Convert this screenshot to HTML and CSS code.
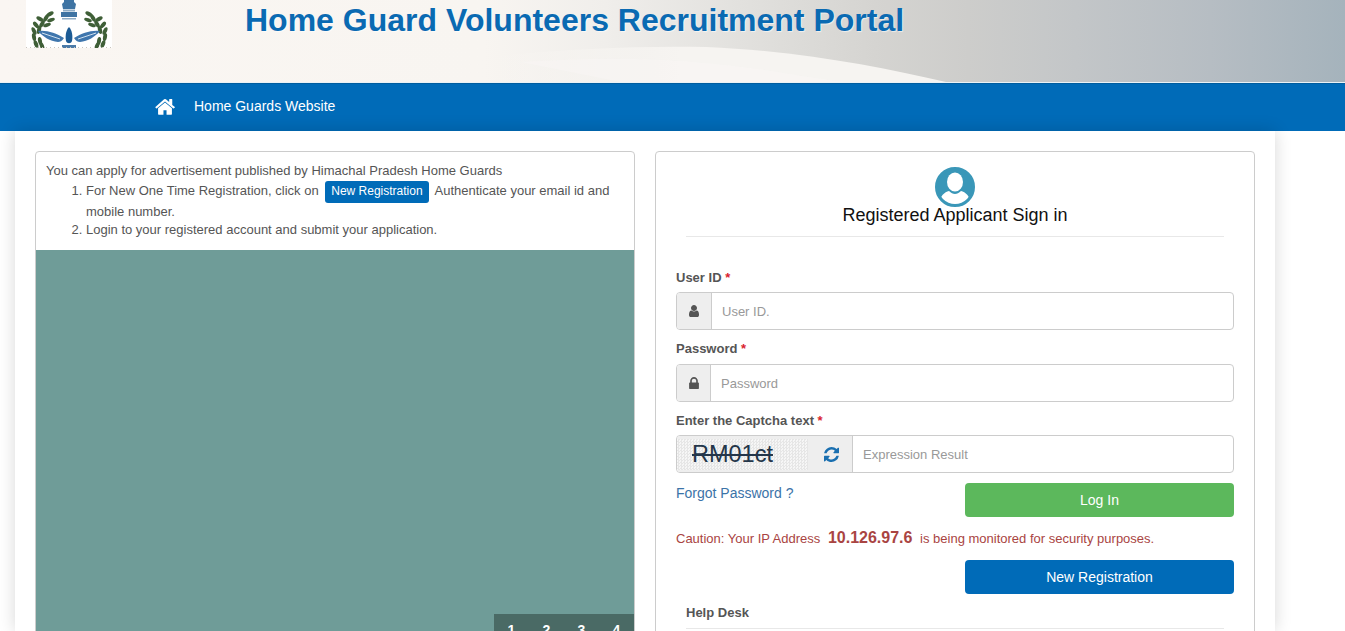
FILE: index.html
```html
<!DOCTYPE html>
<html lang="en">
<head>
<meta charset="utf-8">
<title>Home Guard Volunteers Recruitment Portal</title>
<link rel="stylesheet" href="styles.css">
</head>
<body>
<header class="banner">
  <svg class="banner-art" viewBox="0 0 1345 82" preserveAspectRatio="none" aria-hidden="true">
    <defs>
      <linearGradient id="sky" x1="0" x2="1" y1="0" y2="0">
        <stop offset="0" stop-color="#faf6f2"/>
        <stop offset="0.36" stop-color="#f8f5f1"/>
        <stop offset="0.45" stop-color="#f0eeeb"/>
        <stop offset="0.55" stop-color="#e2e1de"/>
        <stop offset="0.65" stop-color="#d5d4d1"/>
        <stop offset="0.72" stop-color="#cdcdcb"/>
        <stop offset="0.8" stop-color="#c3c6c8"/>
        <stop offset="0.9" stop-color="#b6bdc3"/>
        <stop offset="1" stop-color="#a5b3bc"/>
      </linearGradient>
      <linearGradient id="swoosh" x1="440" x2="680" y1="0" y2="0" gradientUnits="userSpaceOnUse">
        <stop offset="0" stop-color="#f8f5f1" stop-opacity="0"/>
        <stop offset="1" stop-color="#f6f4f1"/>
      </linearGradient>
    </defs>
    <rect width="1345" height="82" fill="url(#sky)"/>
    <path d="M440 62 C520 52 620 45 706 47 C800 51 880 67 946 82 L440 82 Z" fill="url(#swoosh)"/>
    <path d="M520 62 C610 56 690 57 790 74 C815 78 830 80 845 82 L620 82 Z" fill="#fbfaf8" opacity=".3"/>
  </svg>
  <svg class="emblem" viewBox="0 0 86 48" aria-hidden="true">
    <defs>
      <g id="wreath">
        <ellipse cx="24" cy="14" rx="4" ry="2" transform="rotate(-30 24 14)"/>
        <ellipse cx="20" cy="18" rx="4" ry="2" transform="rotate(-60 20 18)"/>
        <ellipse cx="25" cy="20" rx="4" ry="1.800" transform="rotate(-20 25 20)"/>
        <ellipse cx="14" cy="19" rx="4" ry="2" transform="rotate(30 14 19)"/>
        <ellipse cx="16" cy="24" rx="4" ry="2" transform="rotate(-60 16 24)"/>
        <ellipse cx="21" cy="25" rx="4" ry="1.800" transform="rotate(-20 21 25)"/>
        <ellipse cx="10" cy="25" rx="4" ry="2" transform="rotate(50 10 25)"/>
        <ellipse cx="13" cy="30" rx="4" ry="2" transform="rotate(-75 13 30)"/>
        <ellipse cx="8" cy="31" rx="4" ry="2" transform="rotate(65 8 31)"/>
        <ellipse cx="8" cy="37" rx="4" ry="2" transform="rotate(80 8 37)"/>
        <ellipse cx="14" cy="41" rx="4" ry="2" transform="rotate(-100 14 41)"/>
        <ellipse cx="10" cy="44" rx="4" ry="2" transform="rotate(70 10 44)"/>
        <ellipse cx="16" cy="46" rx="4" ry="2" transform="rotate(-110 16 46)"/>
      </g>
    </defs>
    <rect width="86" height="48" fill="#fff"/>
    <path d="M38 0h10v2l2 2-1 5h-12l-1-5 2-2z" fill="#3f74a3"/>
    <path d="M37 9.500h12v2H37z" fill="#8fadc6"/>
    <path d="M35 12h16v5H35z" fill="#3f74a3"/>
    <path d="M36 18h14v1.500H36z" fill="#8fadc6"/>
    <use href="#wreath" fill="#3f5f37"/>
    <use href="#wreath" fill="#3f5f37" transform="matrix(-1 0 0 1 87 0)"/>
    <path d="M12 31c9-1 18 2 26 7-2 3-4 4-6 4-8-1-15-5-20-11zM74 31c-9-1-18 2-26 7 2 3 4 4 6 4 8-1 15-5 20-11z" fill="#3f76ad"/>
    <path d="M16 33l18 6M70 33l-18 6" stroke="#cfe0ee" stroke-width="1"/>
    <path d="M43 27c3 3 4 9 3 14-1 3-5 3-6 0-1-5 0-11 3-14z" fill="#1b5a94"/>
    <path d="M36 45h14v3H36z" fill="#4a7aa8"/>
    <path d="M0 47.500h86" stroke="#c9c4bd" stroke-width="1" stroke-dasharray="1 3"/>
  </svg>
  <h1 class="banner-title">Home Guard Volunteers Recruitment Portal</h1>
</header>

<nav class="topnav">
  <svg class="home-icon" viewBox="0 0 1664 1408" aria-hidden="true">
    <path fill="#fff" d="M1408 768v480q0 26-19 45t-45 19H960V928H704v384H320q-26 0-45-19t-19-45V768q0-1 .5-3t.5-3l575-474 575 474q1 2 1 6zm223-69-62 74q-8 9-21 11h-3q-13 0-21-7L832 200 140 777q-12 8-24 7-13-2-21-11l-62-74q-8-10-7-23.500t11-21.500L756 25q32-25 76-25t76 25l272 227V35q0-14 9-23t23-9h192q14 0 23 9t9 23v454l219 182q10 8 11 21.500t-7 23.500z"/>
  </svg>
  <a class="topnav-link" href="#">Home Guards Website</a>
</nav>

<main class="sheet">
  <section class="panel info">
    <div class="info-text">
      <p class="info-lead">You can apply for advertisement published by Himachal Pradesh Home Guards</p>
      <ol class="info-steps">
        <li>For New One Time Registration, click on <a class="chip" href="#">New Registration</a> Authenticate your email id and mobile number.</li>
        <li>Login to your registered account and submit your application.</li>
      </ol>
    </div>
    <div class="slider">
      <div class="pager"><span>1</span><span>2</span><span>3</span><span>4</span></div>
    </div>
  </section>

  <section class="panel signin">
    <div class="signin-head">
      <svg class="avatar" viewBox="0 0 40 40" aria-hidden="true">
        <circle cx="20" cy="20" r="18" fill="#fff" stroke="#3a97b8" stroke-width="4"/>
        <clipPath id="face"><circle cx="20" cy="20" r="17"/></clipPath>
        <g clip-path="url(#face)">
          <rect width="40" height="40" fill="#3a97b8"/>
          <ellipse cx="20" cy="15" rx="8" ry="9.500" fill="#fff"/>
          <path d="M4 40c0-10 5-15 10-16 2 2 4 3 6 3s4-1 6-3c5 1 10 6 10 16z" fill="#fff"/>
        </g>
      </svg>
      <h2 class="signin-title">Registered Applicant Sign in</h2>
    </div>

    <form class="form">
      <label class="field-label">User ID <em>*</em></label>
      <div class="input-group">
        <span class="addon addon-user">
          <svg class="addon-icon" viewBox="256 128 1280 1536" aria-hidden="true"><path fill="#555" d="M1536 1399q0 109-62.500 187t-150.500 78H469q-88 0-150.500-78T256 1399q0-85 8.500-160.500t31.500-152 58.500-131 94-89T583 832q131 128 313 128t313-128q76 0 134.500 34.500t94 89 58.500 131 31.500 152 8.500 160.500zm-256-887q0 159-112.500 271.500T896 896 624.500 783.500 512 512t112.500-271.500T896 128t271.500 112.500T1280 512z"/></svg>
        </span>
        <span class="control">User ID.</span>
      </div>

      <label class="field-label field-label-loose">Password <em>*</em></label>
      <div class="input-group">
        <span class="addon addon-lock">
          <svg class="addon-icon" viewBox="0 0 1152 1408" aria-hidden="true"><path fill="#555" d="M320 640h512V448q0-106-75-181t-181-75-181 75-75 181v192zm832 96v576q0 40-28 68t-68 28H96q-40 0-68-28t-28-68V736q0-40 28-68t68-28h32V448q0-184 132-316T576 0t316 132 132 316v192h32q40 0 68 28t28 68z"/></svg>
        </span>
        <span class="control">Password</span>
      </div>

      <label class="field-label">Enter the Captcha text <em>*</em></label>
      <div class="input-group">
        <span class="addon addon-captcha">
          <span class="captcha">RM01ct</span>
          <svg class="refresh" viewBox="0 0 1536 1536" aria-hidden="true"><path fill="#1a6fb0" d="M1511 928q0 5-1 7-64 268-268 434.500T764 1536q-146 0-282.500-55T238 1324l-129 129q-19 19-45 19t-45-19-19-45V960q0-26 19-45t45-19h448q26 0 45 19t19 45-19 45L420 1142q71 66 161 102t187 36q134 0 250-65t186-179q11-17 53-117 8-23 30-23h192q13 0 22.500 9.500t9.500 22.500zm25-800v448q0 26-19 45t-45 19h-448q-26 0-45-19t-19-45 19-45l138-138q-148-137-349-137-134 0-250 65T332 500q-11 17-53 117-8 23-30 23H50q-13 0-22.500-9.500T18 608v-7q65-268 270-434.500T768 0q146 0 284 55.500T1297 212l130-129q19-19 45-19t45 19 19 45z"/></svg>
        </span>
        <span class="control">Expression Result</span>
      </div>

      <div class="action-row action-login">
        <a class="forgot" href="#">Forgot Password ?</a>
        <button class="btn btn-green" type="button">Log In</button>
      </div>

      <p class="caution">Caution: Your IP Address <strong>10.126.97.6</strong> is being monitored for security purposes.</p>

      <div class="action-row action-register">
        <button class="btn btn-blue" type="button">New Registration</button>
      </div>
    </form>

    <h3 class="help-title">Help Desk</h3>
  </section>
</main>
</body>
</html>
```

FILE: styles.css
```css
* { box-sizing: border-box; }
html, body { margin: 0; height: 631px; overflow: hidden; background: #fff; }
body { font-family: "Liberation Sans", Arial, sans-serif; font-size: 13px; color: #555; }

.banner { position: relative; height: 83px; padding-left: 245px; border-bottom: 1px solid #eaf2f6; overflow: hidden; }
.banner-art { position: absolute; left: 0; top: 0; width: 100%; height: 82px; }
.emblem { position: absolute; left: 26px; top: 0; width: 86px; height: 48px; }
.banner-title { position: relative; margin: 0; padding-top: 1px; font-size: 32px; line-height: 38px; font-weight: 700; color: #0a6ab2; white-space: nowrap; text-shadow: 1px 1px 1px rgba(255,255,255,.6); }

.topnav { display: flex; align-items: center; height: 48px; padding-left: 154.500px; background: #006bb8; border-top: 1px solid #005d9f; }
.home-icon { width: 20px; height: 17px; }
.topnav-link { margin-left: 19.500px; padding-bottom: 4px; color: #fff; font-size: 14px; text-decoration: none; }

.sheet { display: flex; align-items: flex-start; gap: 20px; width: 1260px; height: 500px; margin-left: 15px; padding: 20px 20px 0; background: #fff; box-shadow: 0 0 16px rgba(0,0,0,.16); }
.panel { width: 600px; background: #fff; border: 1px solid #ccc; border-radius: 4px; flex: none; }

.info { height: 520px; overflow: hidden; }
.info-text { height: 98px; padding: 10px 10px 0; line-height: 18.570px; }
.info-lead { margin: 0; }
.info-steps { margin: 0; padding-left: 40px; }
.chip { display: inline-block; height: 22px; margin: 0 3px; padding: 0 6px; line-height: 21px; background: #006bb8; color: #fff; border-radius: 3px; text-decoration: none; font-size: 12px; vertical-align: middle; }
.slider { position: relative; height: 422px; background: #6f9c98; }
.pager { position: absolute; right: 0; top: 364px; display: flex; width: 140px; height: 58px; padding-top: 8px; background: #4a6a65; color: #fff; font-size: 14px; font-weight: 700; }
.pager span { flex: none; width: 35px; text-align: center; line-height: 16px; }

.signin { height: 520px; padding: 0 20px; }
.signin-head { display: flex; flex-direction: column; align-items: center; height: 85px; margin: 0 10px; border-bottom: 1px solid #e8e8e8; padding-top: 15px; }
.avatar { width: 40px; height: 40px; flex: none; }
.signin-title { margin: -2px 0 0; font-size: 18px; line-height: 20px; font-weight: 400; color: #111; }

.form { padding-top: 32px; }
.field-label { display: block; font-weight: 700; font-size: 13px; line-height: 18px; margin-bottom: 5px; color: #555; }
.field-label-loose { margin-bottom: 6px; }
.field-label em { font-style: normal; color: #d9232e; }
.input-group { display: flex; height: 38px; margin-bottom: 10px; border: 1px solid #ccc; border-radius: 4px; overflow: hidden; background: #fff; }
.addon { display: flex; align-items: center; justify-content: center; flex: none; background: #eee; border-right: 1px solid #ccc; }
.addon-user { width: 35px; }
.addon-lock { width: 34px; }
.addon-captcha { width: 176px; justify-content: flex-start; }
.addon-icon { width: 10px; height: 12px; }
.captcha { display: block; width: 131px; height: 31px; margin-right: 16px; padding-left: 15px; background: repeating-conic-gradient(#e6e6e6 0 25%, #f6f6f6 0 50%) 0 0 / 3px 3px; color: #24364a; font-size: 23.500px; line-height: 31px; text-decoration: line-through; text-decoration-thickness: 1.500px; }
.refresh { width: 15px; height: 15px; flex: none; }
.control { flex: 1; padding-left: 10px; line-height: 37px; color: #999; font-size: 13px; }

.action-row { display: flex; justify-content: space-between; align-items: flex-start; }
.action-login { margin-top: 1px; }
.action-register { justify-content: flex-end; }
.forgot { margin-top: 1px; color: #3b73a8; font-size: 14px; line-height: 18px; text-decoration: none; }
.btn { width: 269px; height: 34px; border: 0; border-radius: 4px; font: 14px "Liberation Sans", Arial, sans-serif; color: #fff; }
.btn-green { background: #5cb85c; }
.btn-blue { background: #006bb8; }
.caution { margin: 11px 0 11px; color: #a94442; font-size: 13px; line-height: 20px; white-space: nowrap; }
.caution strong { margin: 0 4px; font-size: 16px; }

.help-title { margin: 10px 10px 0; padding-bottom: 6px; border-bottom: 1px solid #e8e8e8; font-size: 13px; line-height: 18px; color: #555; }
```
